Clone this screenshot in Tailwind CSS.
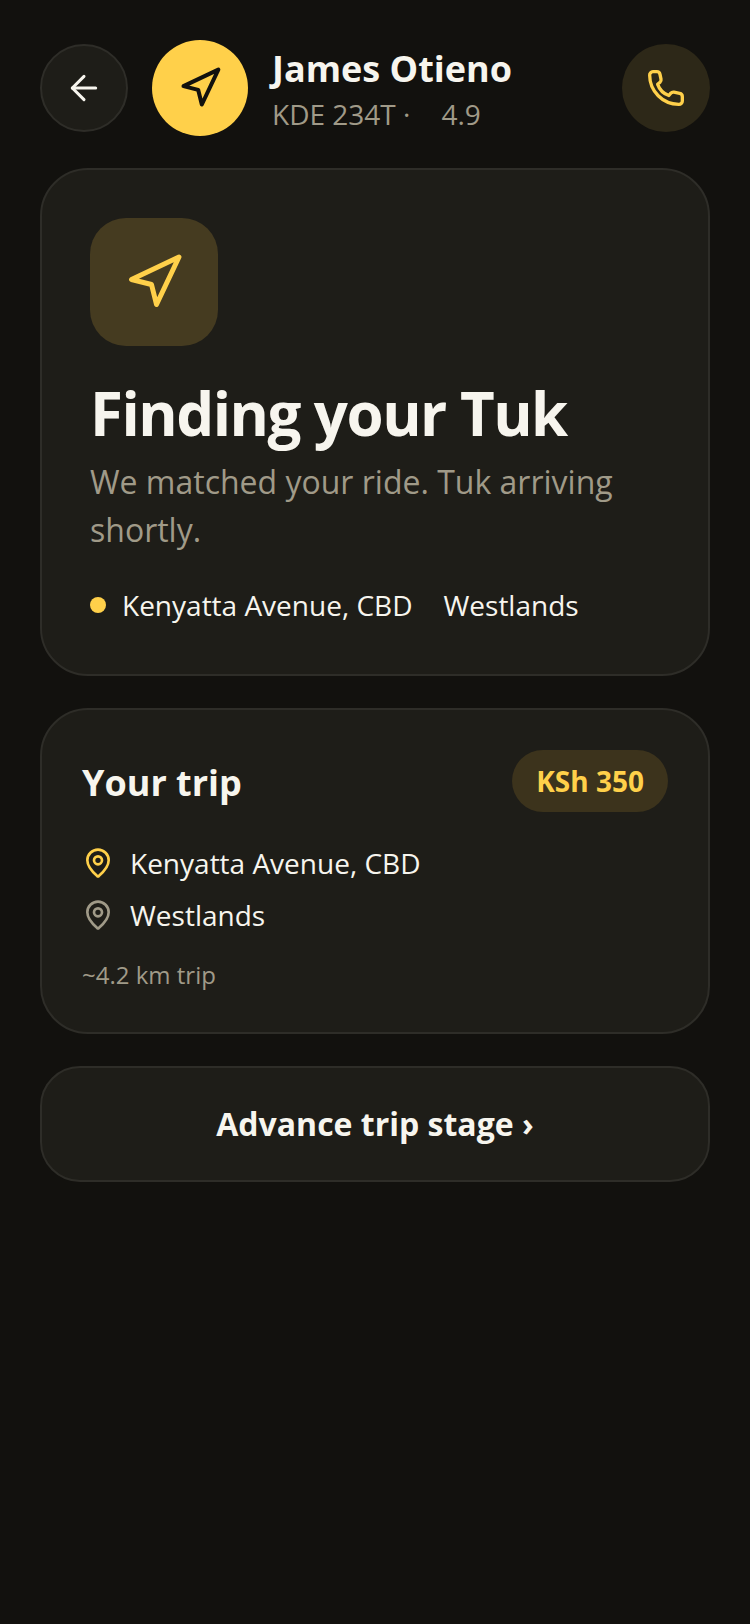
<!DOCTYPE html>
<html><head><meta charset="utf-8"><script src="https://cdn.jsdelivr.net/npm/@tailwindcss/browser@4"></script></head>
<body class="m-0 bg-[#12110e]">
<div class="w-[750px] h-[1624px] bg-[#12110e] font-['Open_Sans',sans-serif] px-10 pt-10 flex flex-col text-[#f7f5ee]">
  <header class="flex items-center h-24 gap-6">
    <button class="w-[88px] h-[88px] rounded-full bg-[#1e1d18] border-2 border-[#2e2d28] flex items-center justify-center shrink-0">
      <svg class="w-10 h-10" viewBox="0 0 24 24" fill="none" stroke="#f7f5ee" stroke-width="1.8" stroke-linecap="round" stroke-linejoin="round"><path d="m12 19-7-7 7-7"/><path d="M19 12H5"/></svg>
    </button>
    <div class="w-24 h-24 rounded-full bg-[#ffd04a] flex items-center justify-center shrink-0">
      <svg class="w-11 h-11" viewBox="0 0 24 24" fill="none" stroke="#12110e" stroke-width="2.2" stroke-linecap="round" stroke-linejoin="round"><polygon points="3 11 22 2 13 21 11 13 3 11"/></svg>
    </div>
    <div class="flex-1 flex flex-col pt-[5px]">
      <div class="text-[36px] leading-[48px] font-bold">James Otieno</div>
      <div class="text-[28px] leading-[43px] text-[#a09a88]">KDE 234T ·<span class="ml-[31px]">4.9</span></div>
    </div>
    <button class="w-[88px] h-[88px] rounded-full bg-[#2d2818] flex items-center justify-center shrink-0">
      <svg class="w-10 h-10" viewBox="0 0 24 24" fill="none" stroke="#ffd04a" stroke-width="2" stroke-linecap="round" stroke-linejoin="round"><path d="M4.2 2.2h2.2a2 2 0 0 1 2 1.6l.6 2.9a2 2 0 0 1-.6 1.9L7 9.8a11 11 0 0 0 6.7 6.7l1.2-1.4a2 2 0 0 1 1.9-.6l3.4.7a2 2 0 0 1 1.6 2v2.6a2 2 0 0 1-2.2 2A17.5 17.5 0 0 1 2.2 4.4a2 2 0 0 1 2-2.2z"/></svg>
    </button>
  </header>
  <section class="mt-8 h-[508px] rounded-[48px] bg-[#1e1d18] border-2 border-[#2e2d28] p-12 flex flex-col">
    <div class="w-32 h-32 shrink-0 rounded-[36px] bg-[#453b20] flex items-center justify-center">
      <svg class="w-[60px] h-[60px]" viewBox="0 0 24 24" fill="none" stroke="#ffd04a" stroke-width="2" stroke-linecap="round" stroke-linejoin="round"><polygon points="3 11 22 2 13 21 11 13 3 11"/></svg>
    </div>
    <h1 class="mt-[31px] text-[60px] leading-[72px] font-bold tracking-[-1.5px]">Finding your Tuk</h1>
    <p class="mt-[9px] text-[32px] leading-[48px] text-[#a09a88]">We matched your ride. Tuk arriving shortly.</p>
    <div class="mt-[30px] flex items-center text-[28px] leading-[42px]">
      <span class="w-4 h-4 rounded-full bg-[#ffd04a] mr-4"></span><span>Kenyatta Avenue, CBD</span><span class="ml-[31px]">Westlands</span>
    </div>
  </section>
  <section class="mt-8 h-[326px] rounded-[48px] bg-[#1e1d18] border-2 border-[#2e2d28] p-10 flex flex-col">
    <div class="flex items-center justify-between h-[62px]">
      <h2 class="text-[36px] leading-[48px] font-bold pt-1">Your trip</h2>
      <span class="h-[62px] px-6 rounded-full bg-[#3c331c] text-[#ffd04a] text-[28px] font-bold flex items-center">KSh 350</span>
    </div>
    <div class="mt-[30px] flex items-center gap-4 text-[28px] leading-[42px]">
      <svg class="w-8 h-8" viewBox="0 0 24 24" fill="none" stroke="#ffd04a" stroke-width="2" stroke-linecap="round" stroke-linejoin="round"><path d="M20 10c0 4.993-5.539 10.193-7.399 11.799a1 1 0 0 1-1.202 0C9.539 20.193 4 14.993 4 10a8 8 0 0 1 16 0"/><circle cx="12" cy="10" r="3"/></svg>
      <span>Kenyatta Avenue, CBD</span>
    </div>
    <div class="mt-[10px] flex items-center gap-4 text-[28px] leading-[42px]">
      <svg class="w-8 h-8" viewBox="0 0 24 24" fill="none" stroke="#a09a88" stroke-width="2" stroke-linecap="round" stroke-linejoin="round"><path d="M20 10c0 4.993-5.539 10.193-7.399 11.799a1 1 0 0 1-1.202 0C9.539 20.193 4 14.993 4 10a8 8 0 0 1 16 0"/><circle cx="12" cy="10" r="3"/></svg>
      <span>Westlands</span>
    </div>
    <div class="mt-[21px] text-[24px] leading-9 text-[#a09a88]">~4.2 km trip</div>
  </section>
  <button class="mt-8 h-[116px] rounded-[40px] bg-[#1e1d18] border-2 border-[#2e2d28] text-[32px] font-bold text-[#f7f5ee]">Advance trip stage ›</button>
</div>
</body></html>
